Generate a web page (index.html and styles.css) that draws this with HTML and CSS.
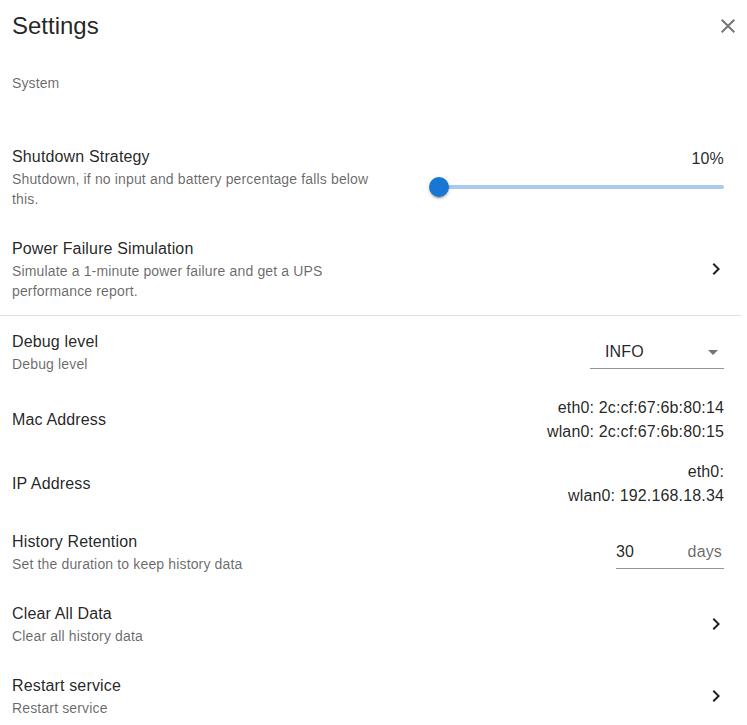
FILE: index.html
```html
<!DOCTYPE html>
<html lang="en">
<head>
<meta charset="utf-8">
<title>Settings</title>
<link rel="stylesheet" href="styles.css">
</head>
<body>
<div class="dialog">
  <header class="header">
    <h2 class="title">Settings</h2>
    <button class="close" aria-label="close">
      <svg viewBox="0 0 24 24" width="24" height="24"><path d="M19 6.41 17.59 5 12 10.59 6.41 5 5 6.41 10.59 12 5 17.59 6.41 19 12 13.41 17.59 19 19 17.59 13.41 12z"/></svg>
    </button>
  </header>
  <div class="subheader">System</div>
  <ul class="list">
    <li class="item">
      <div class="text half">
        <div class="primary">Shutdown Strategy</div>
        <div class="secondary">Shutdown, if no input and battery percentage falls below this.</div>
      </div>
      <div class="spacer"></div>
      <div class="slider-col">
        <div class="slider-value">10%</div>
        <div class="slider">
          <div class="rail"></div>
          <div class="thumb"></div>
        </div>
      </div>
    </li>
    <li class="item">
      <div class="text half">
        <div class="primary">Power Failure Simulation</div>
        <div class="secondary">Simulate a 1-minute power failure and get a UPS performance report.</div>
      </div>
      <div class="spacer"></div>
      <svg class="chev" viewBox="0 0 24 24" width="24" height="24"><path d="M10 6 8.59 7.41 13.17 12l-4.58 4.59L10 18l6-6z"/></svg>
    </li>
    <li class="divider"></li>
    <li class="item">
      <div class="text">
        <div class="primary">Debug level</div>
        <div class="secondary">Debug level</div>
      </div>
      <div class="spacer"></div>
      <div class="select">
        <span class="select-value">INFO</span>
        <svg class="drop" viewBox="0 0 24 24" width="24" height="24"><path d="M7 10l5 5 5-5z"/></svg>
      </div>
    </li>
    <li class="item">
      <div class="text single">
        <div class="primary">Mac Address</div>
      </div>
      <div class="spacer"></div>
      <div class="values">
        <div>eth0: 2c:cf:67:6b:80:14</div>
        <div>wlan0: 2c:cf:67:6b:80:15</div>
      </div>
    </li>
    <li class="item">
      <div class="text single">
        <div class="primary">IP Address</div>
      </div>
      <div class="spacer"></div>
      <div class="values">
        <div>eth0:</div>
        <div>wlan0: 192.168.18.34</div>
      </div>
    </li>
    <li class="item">
      <div class="text">
        <div class="primary">History Retention</div>
        <div class="secondary">Set the duration to keep history data</div>
      </div>
      <div class="spacer"></div>
      <div class="input">
        <span class="input-value">30</span>
        <span class="adorn">days</span>
      </div>
    </li>
    <li class="item">
      <div class="text">
        <div class="primary">Clear All Data</div>
        <div class="secondary">Clear all history data</div>
      </div>
      <div class="spacer"></div>
      <svg class="chev" viewBox="0 0 24 24" width="24" height="24"><path d="M10 6 8.59 7.41 13.17 12l-4.58 4.59L10 18l6-6z"/></svg>
    </li>
    <li class="item">
      <div class="text">
        <div class="primary">Restart service</div>
        <div class="secondary">Restart service</div>
      </div>
      <div class="spacer"></div>
      <svg class="chev" viewBox="0 0 24 24" width="24" height="24"><path d="M10 6 8.59 7.41 13.17 12l-4.58 4.59L10 18l6-6z"/></svg>
    </li>
  </ul>
</div>
</body>
</html>
```
FILE: styles.css
```css
* { box-sizing: border-box; }
html, body {
  margin: 0;
  padding: 0;
  background: #fff;
}
body {
  font-family: "Liberation Sans", Arial, sans-serif;
  color: rgba(0, 0, 0, 0.87);
  overflow: hidden;
}
.dialog {
  padding: 1px 23px 0 12px;
}
.header {
  display: flex;
  align-items: center;
  height: 50px;
}
.title {
  margin: 0;
  flex: 1;
  font-size: 24px;
  font-weight: 400;
  line-height: 32px;
}
.close {
  border: 0;
  background: none;
  padding: 0;
  width: 24px;
  height: 24px;
  margin-right: -16px;
  display: flex;
  fill: #757575;
}
.subheader {
  margin-top: 8px;
  line-height: 48px;
  font-size: 14px;
  letter-spacing: 0.1px;
  color: rgba(0, 0, 0, 0.6);
  margin-bottom: 24px;
}
.list {
  list-style: none;
  margin: 0;
  padding: 0;
}
.item {
  display: flex;
  align-items: center;
  padding: 8px 0;
}
.divider {
  border-top: 1px solid #e0e0e0;
  margin: 0 -17px 0 -12px;
}
.text {
  margin: 6px 0;
  min-width: 0;
}
.text.single {
  margin: 4px 0;
}
.text.half {
  flex: 0 1 auto;
  max-width: 372px;
}
.primary {
  font-size: 16px;
  line-height: 24px;
  letter-spacing: 0.15px;
}
.secondary {
  font-size: 14px;
  line-height: 20px;
  letter-spacing: 0.15px;
  color: rgba(0, 0, 0, 0.6);
}
.spacer { flex: 1; }
.slider-col {
  flex: none;
  align-self: stretch;
  display: flex;
  flex-direction: column;
  align-items: flex-end;
  padding-top: 8px;
}
.slider-value {
  font-size: 16px;
  line-height: 24px;
  letter-spacing: 0.15px;
}
.slider {
  position: relative;
  width: 285px;
  height: 32px;
}
.rail {
  position: absolute;
  left: 0;
  right: 0;
  top: 14px;
  height: 4px;
  border-radius: 2px;
  background: #a7caee;
}
.thumb {
  position: absolute;
  left: -10px;
  top: 6px;
  width: 20px;
  height: 20px;
  border-radius: 50%;
  background: #1976d2;
  box-shadow: 0 3px 1px -2px rgba(0,0,0,0.2), 0 2px 2px 0 rgba(0,0,0,0.14), 0 1px 5px 0 rgba(0,0,0,0.12);
}
.chev {
  fill: rgba(0, 0, 0, 0.87);
  margin-right: -4px;
  flex: none;
}
.select {
  width: 134px;
  display: flex;
  align-items: center;
  padding: 4px 0 4px 15px;
  border-bottom: 1px solid rgba(0, 0, 0, 0.42);
  font-size: 16px;
  line-height: 24px;
  letter-spacing: 0.15px;
}
.select-value { flex: 1; }
.drop {
  fill: #757575;
  margin-right: -1px;
}
.values {
  text-align: right;
  font-size: 16px;
  line-height: 24px;
  letter-spacing: 0.15px;
}
.input {
  width: 108px;
  display: flex;
  justify-content: space-between;
  padding: 4px 2px 4px 0;
  border-bottom: 1px solid rgba(0, 0, 0, 0.42);
  font-size: 16px;
  line-height: 24px;
  letter-spacing: 0.15px;
}
.adorn {
  color: rgba(0, 0, 0, 0.6);
}
```
